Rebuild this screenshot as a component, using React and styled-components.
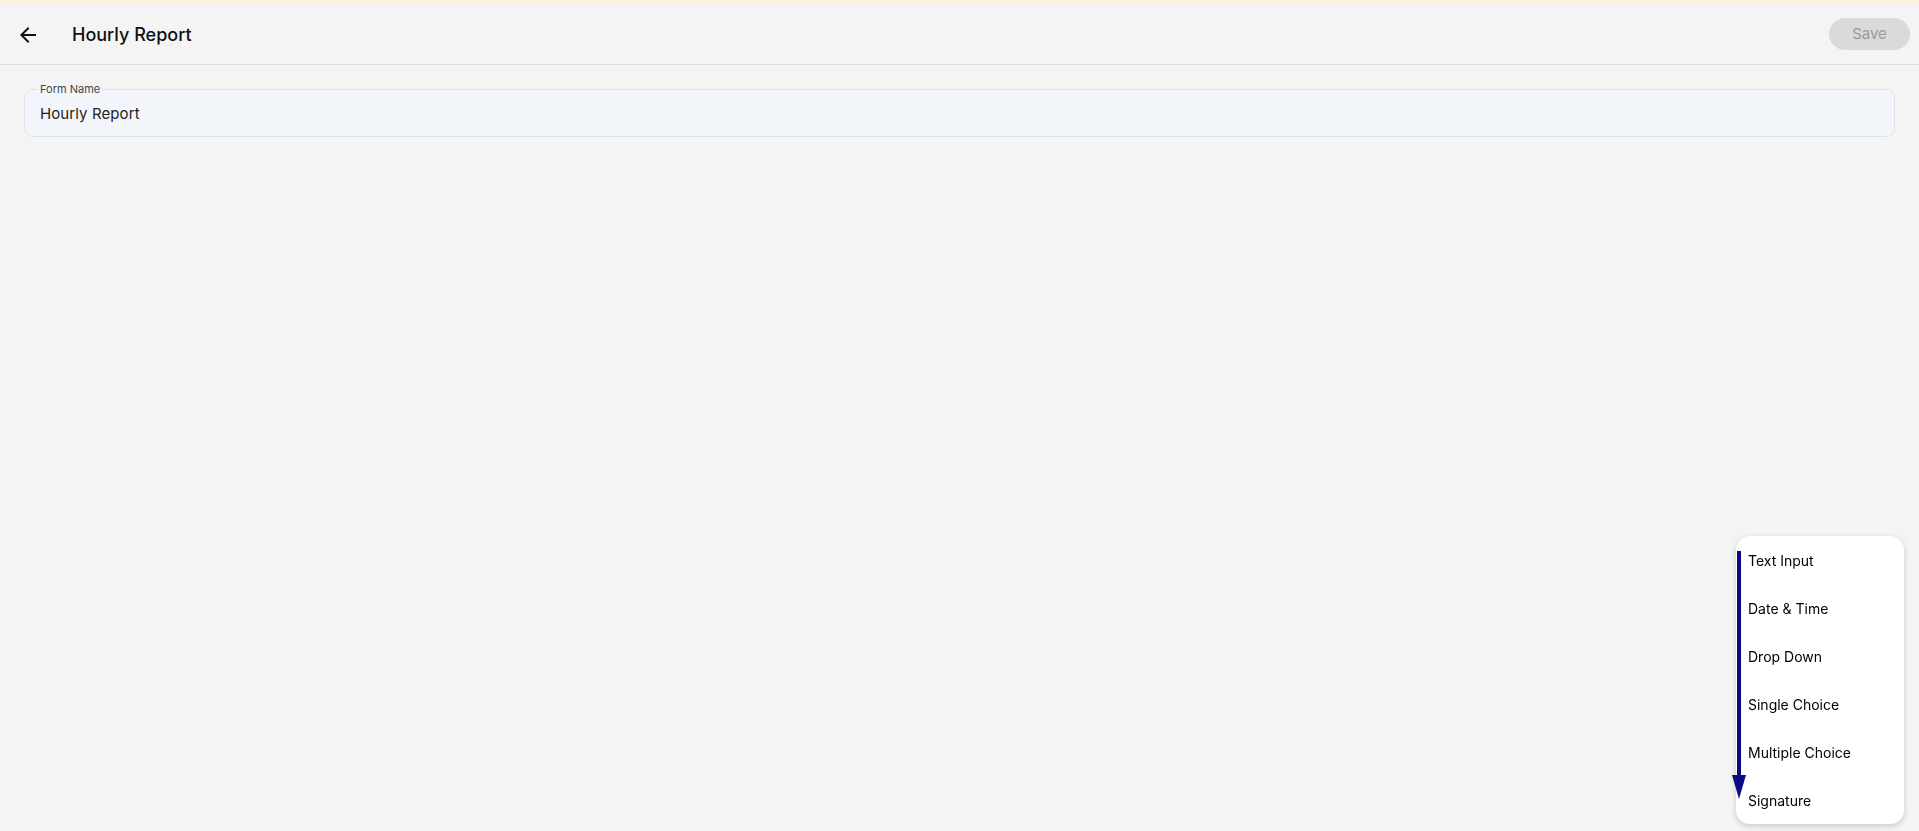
import styled, { createGlobalStyle } from 'styled-components';

const GlobalStyle = createGlobalStyle`
  html, body {
    margin: 0;
    padding: 0;
    background: #f4f4f4;
    font-family: Inter, "Noto Sans", sans-serif;
    color: #111;
  }
  #root { min-height: 831px; }
`;

const Page = styled.div`
  min-height: 831px;
  display: flex;
  flex-direction: column;
  background: #f4f4f4;
`;

const TopStrip = styled.div`
  height: 3px;
  background: #fdf2de;
`;

const Header = styled.header`
  height: 62px;
  display: flex;
  align-items: center;
  padding: 2px 9px 0 16px;
  box-sizing: border-box;
  border-bottom: 1px solid #dcdcdc;
`;

const BackButton = styled.button`
  width: 24px;
  height: 24px;
  padding: 0;
  border: none;
  background: none;
  display: flex;
  align-items: center;
  justify-content: center;
  cursor: pointer;
  color: #111;
`;

const Title = styled.h1`
  margin: 0 0 0 32px;
  font-size: 18px;
  font-weight: 500;
  color: #111;
  flex: 1;
`;

const SaveButton = styled.button`
  width: 81px;
  height: 32px;
  margin-top: -2px;
  border: none;
  border-radius: 16px;
  background: #dadada;
  color: #9a9a9a;
  font-family: Inter, sans-serif;
  font-size: 15px;
`;

const Main = styled.main`
  padding: 18px 24px 24px;
`;

const Field = styled.fieldset`
  margin: 0;
  height: 54px;
  box-sizing: border-box;
  border: 1px solid #dde2e8;
  border-radius: 9px;
  background: #f2f6fb;
  padding: 0 15px;
`;

const Legend = styled.legend`
  font-size: 11px;
  color: #444;
  padding: 0 2px;
  margin-left: -2px;
  line-height: 12px;
`;

const Value = styled.div`
  font-size: 15px;
  color: #222;
  letter-spacing: 0.1px;
  line-height: 20px;
  margin-top: 9px;
`;

const Menu = styled.ul`
  position: fixed;
  right: 15px;
  bottom: 7px;
  width: 168px;
  margin: 0;
  padding: 0;
  list-style: none;
  background: #fff;
  border-radius: 14px;
  box-shadow: 0 2px 6px rgba(0, 0, 0, 0.18);
`;

const MenuItem = styled.li`
  height: 48px;
  display: flex;
  align-items: center;
  padding-left: 12px;
  font-size: 14px;
  color: #000;
`;

const ArrowMark = styled.svg`
  position: absolute;
  left: -4px;
  top: 15px;
  pointer-events: none;
`;

const items = ['Text Input', 'Date & Time', 'Drop Down', 'Single Choice', 'Multiple Choice', 'Signature'];

export default function App() {
  return (
    <Page>
      <GlobalStyle />
      <TopStrip />
      <Header>
        <BackButton aria-label="Back">
          <svg width="24" height="24" viewBox="0 0 24 24" fill="currentColor">
            <path d="M20 11H7.83l5.59-5.59L12 4l-8 8 8 8 1.41-1.41L7.83 13H20v-2z" />
          </svg>
        </BackButton>
        <Title>Hourly Report</Title>
        <SaveButton disabled>Save</SaveButton>
      </Header>
      <Main>
        <Field>
          <Legend>Form Name</Legend>
          <Value>Hourly Report</Value>
        </Field>
      </Main>
      <Menu>
        <ArrowMark width="16" height="250" viewBox="0 0 16 250">
          <rect x="5" y="0" width="4" height="226" fill="#0b0b85" />
          <polygon points="0,224 14,224 7,248" fill="#0b0b85" />
        </ArrowMark>
        {items.map(i => (
          <MenuItem key={i}>{i}</MenuItem>
        ))}
      </Menu>
    </Page>
  );
}
